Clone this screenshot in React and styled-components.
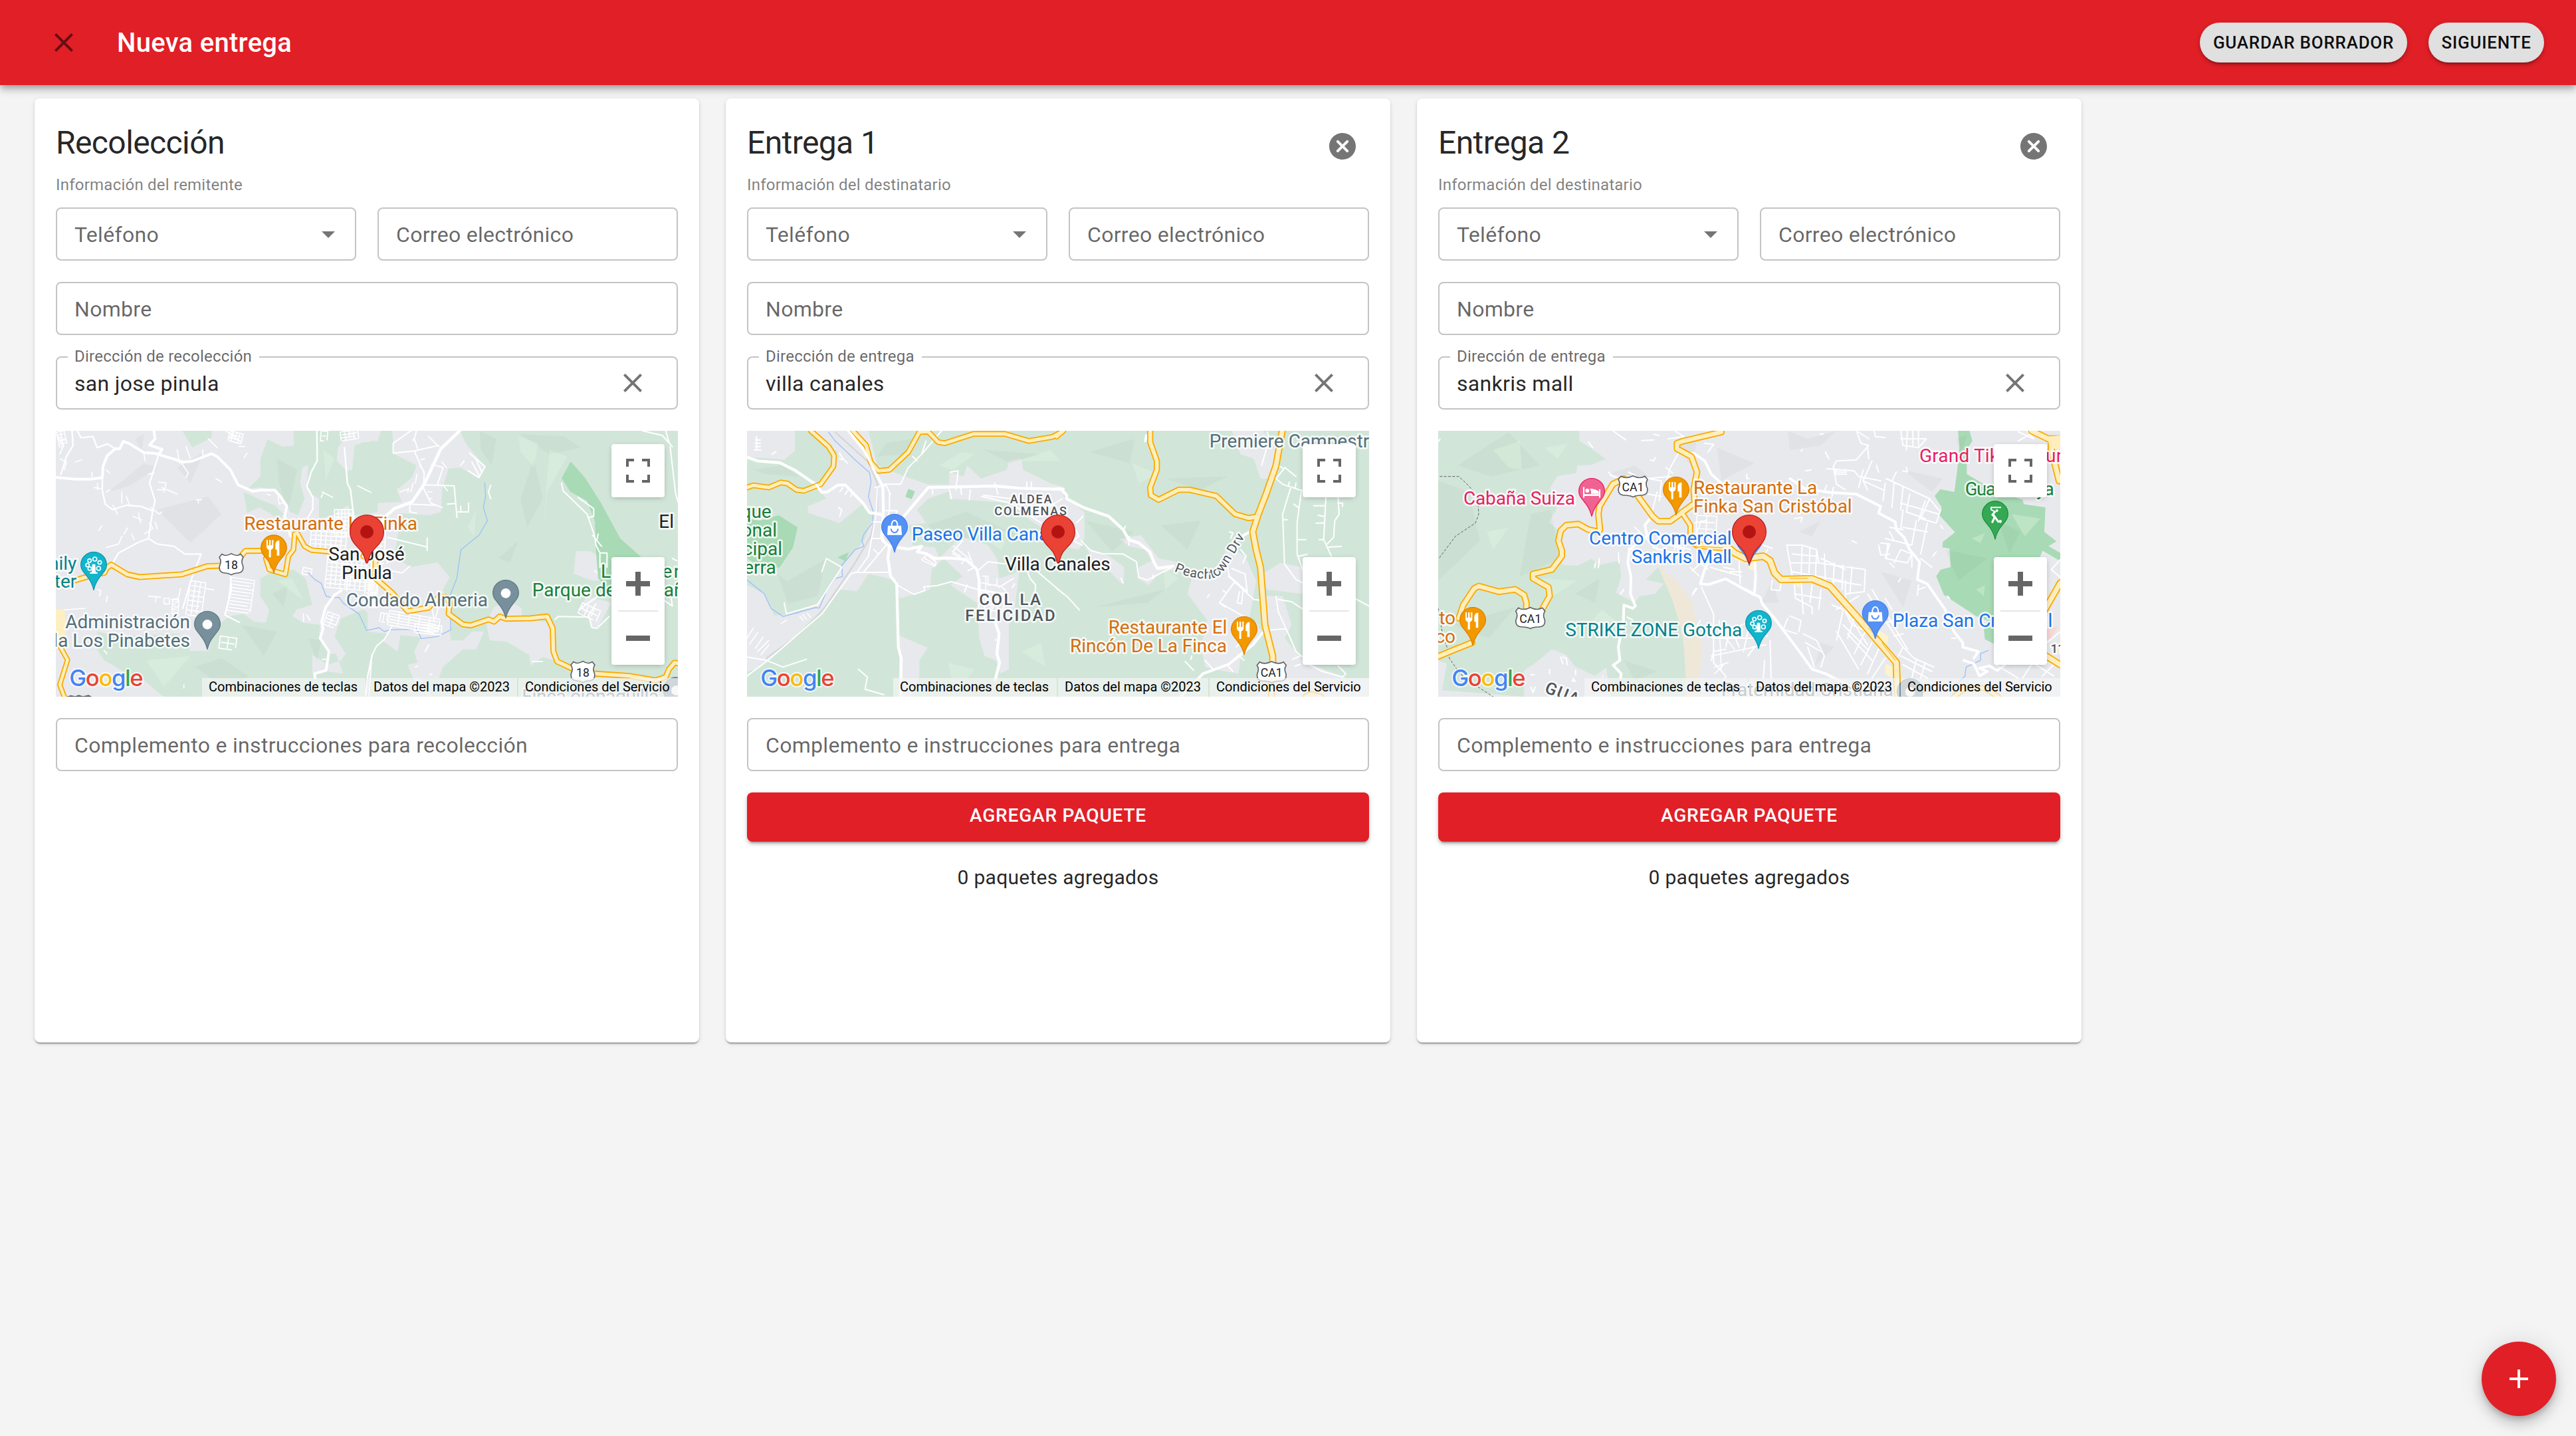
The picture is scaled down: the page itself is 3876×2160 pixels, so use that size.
import React from "react";
import styled, { createGlobalStyle, css } from "styled-components";

const GlobalStyle = createGlobalStyle`
  *, *::before, *::after { box-sizing: border-box; }
  html, body { margin: 0; padding: 0; background: #f4f4f4; }
  body { font-family: Roboto, "Liberation Sans", sans-serif; color: rgba(0, 0, 0, 0.87); }
  button, input { font-family: inherit; }
`;

const RED = "#e11f27";

/* ---------- page shell ---------- */

const Page = styled.div`
  min-height: 2160px;
  display: flex;
  flex-direction: column;
`;

const AppBar = styled.header`
  position: relative;
  z-index: 2;
  height: 128px;
  padding: 0 48px 0 72px;
  display: flex;
  align-items: center;
  background: ${RED};
  box-shadow: 0 4px 8px -2px rgba(0, 0, 0, 0.2), 0 8px 10px 0 rgba(0, 0, 0, 0.14),
    0 2px 20px 0 rgba(0, 0, 0, 0.12);
`;

const AppTitle = styled.h1`
  flex: 1;
  margin: 0 0 0 56px;
  padding-top: 2px;
  font-size: 40px;
  font-weight: 500;
  line-height: 64px;
  letter-spacing: 0.0075em;
  color: #fff;
`;

const Actions = styled.div`
  display: flex;
  gap: 32px;
`;

const PillButton = styled.button`
  width: ${(p) => p.$width}px;
  height: 60px;
  padding: 0;
  border: 0;
  border-radius: 30px;
  background: #e0e0e0;
  color: rgba(0, 0, 0, 0.95);
  font-size: 26px;
  font-weight: 500;
  letter-spacing: 0.0285em;
  white-space: nowrap;
  box-shadow: 0 6px 2px -4px rgba(0, 0, 0, 0.2), 0 4px 4px 0 rgba(0, 0, 0, 0.14),
    0 2px 10px 0 rgba(0, 0, 0, 0.12);
`;

const IconButton = styled.button`
  width: ${(p) => p.$size || 48}px;
  height: ${(p) => p.$size || 48}px;
  flex: none;
  padding: 0;
  border: 0;
  background: none;
  color: rgba(0, 0, 0, 0.54);
  display: flex;
  align-items: center;
  justify-content: center;
`;

const Icon = styled.svg`
  width: 48px;
  height: 48px;
  fill: currentColor;
  display: block;
`;

const Board = styled.main`
  display: flex;
  gap: 40px;
  padding: 20px 52px;
`;

/* ---------- card ---------- */

const Card = styled.section`
  width: 1000px;
  height: 1420px;
  padding: 32px;
  border-radius: 8px;
  background: #fff;
  display: flex;
  flex-direction: column;
  box-shadow: 0 4px 2px -2px rgba(0, 0, 0, 0.2), 0 2px 2px 0 rgba(0, 0, 0, 0.14),
    0 2px 6px 0 rgba(0, 0, 0, 0.12);
`;

const CardHead = styled.div`
  height: 78px;
  display: flex;
  align-items: flex-start;
  justify-content: space-between;
`;

const CardTitle = styled.h2`
  margin: 3px 0 0;
  font-size: 48px;
  font-weight: 400;
  line-height: 64px;
  letter-spacing: -0.6px;
`;

const Caption = styled.div`
  height: 40px;
  margin-bottom: 14px;
  font-size: 24px;
  line-height: 40px;
  letter-spacing: 0.0094em;
  color: rgba(0, 0, 0, 0.5);
`;

const Fields = styled.div`
  display: flex;
  flex-direction: column;
  gap: 32px;
`;

const FieldRow = styled.div`
  display: grid;
  grid-template-columns: 1fr 1fr;
  gap: 32px;
`;

const FieldBox = styled.div`
  position: relative;
  height: 80px;
  padding: 0 ${(p) => p.$end || 26}px 0 26px;
  border: 2px solid rgba(0, 0, 0, 0.23);
  border-radius: 8px;
  display: flex;
  align-items: center;
  justify-content: space-between;
  font-size: 32px;
  letter-spacing: 0.0094em;
`;

const Placeholder = styled.span`
  padding-top: 2px;
  color: rgba(0, 0, 0, 0.6);
`;

const FieldValue = styled.span`
  padding-top: 2px;
  color: rgba(0, 0, 0, 0.87);
`;

const FloatLabel = styled.span`
  position: absolute;
  left: 16px;
  top: -17px;
  padding: 0 11px 0 10px;
  background: #fff;
  color: rgba(0, 0, 0, 0.6);
  font-size: 24px;
  line-height: 30px;
  letter-spacing: 0.0094em;
`;

const AddButton = styled.button`
  height: 74px;
  padding: 0 0 5px;
  border: 0;
  border-radius: 8px;
  background: ${RED};
  color: #fff;
  font-size: 28px;
  font-weight: 500;
  letter-spacing: 0.0286em;
  box-shadow: 0 6px 2px -4px rgba(0, 0, 0, 0.2), 0 4px 4px 0 rgba(0, 0, 0, 0.14),
    0 2px 10px 0 rgba(0, 0, 0, 0.12);
`;

const Count = styled.p`
  margin: -2px 0 0;
  text-align: center;
  font-size: 30px;
  line-height: 48px;
  letter-spacing: 0.0094em;
`;

const Fab = styled.button`
  position: fixed;
  right: 30px;
  bottom: 30px;
  width: 112px;
  height: 112px;
  padding: 0;
  border: 0;
  border-radius: 50%;
  background: ${RED};
  color: #fff;
  display: flex;
  align-items: center;
  justify-content: center;
  box-shadow: 0 6px 10px -2px rgba(0, 0, 0, 0.2), 0 12px 20px 0 rgba(0, 0, 0, 0.14),
    0 2px 36px 0 rgba(0, 0, 0, 0.12);
`;

/* ---------- map frame ---------- */

const MapFrame = styled.div`
  position: relative;
  width: 936px;
  height: 400px;
  overflow: hidden;
`;

const MapCanvas = styled.svg`
  width: 936px;
  height: 400px;
  display: block;
  font-family: Roboto, "Liberation Sans", sans-serif;
`;

const Controls = styled.div`
  position: absolute;
  top: 20px;
  right: 20px;
  width: 80px;
  display: flex;
  flex-direction: column;
  gap: 90px;
`;

const ControlBox = styled.div`
  height: ${(p) => p.$height}px;
  border-radius: 4px;
  background: #fff;
  box-shadow: 0 2px 8px -2px rgba(0, 0, 0, 0.3);
`;

const ControlIcon = styled.svg`
  display: block;
  fill: #666;
`;

const Attribution = styled.div`
  position: absolute;
  right: 0;
  bottom: 0;
  height: 28px;
  display: flex;
  gap: 2px;
`;

const Credit = styled.span`
  width: ${(p) => p.$width}px;
  padding-left: 10px;
  background: rgba(245, 245, 245, 0.7);
  color: #000;
  font-size: 20px;
  line-height: 27px;
  white-space: nowrap;
`;

/* ---------- map primitives ---------- */

const Ground = styled.rect`
  fill: ${(p) => p.$tone || "#e8e9ed"};
`;
const Wood = styled.polygon`
  fill: #d1e6d9;
`;
const Town = styled.polygon`
  fill: #e8e9ed;
`;
const Park = styled.polygon`
  fill: #a8dab5;
`;
const Shade = styled.path`
  fill: rgba(60, 90, 80, 0.045);
`;
const Glow = styled.path`
  fill: rgba(225, 245, 225, 0.35);
`;
const line = css`
  fill: none;
  stroke-linecap: round;
  stroke-linejoin: round;
`;
const Street = styled.path`
  ${line}
  stroke: #fff;
  stroke-width: ${(p) => p.$w || 6};
`;
const River = styled.path`
  ${line}
  stroke: #9dc0f9;
  stroke-width: 4;
`;
const Rail = styled.path`
  ${line}
  stroke: #d5d6da;
  stroke-width: 7;
`;
const Border = styled.path`
  ${line}
  stroke: #5f6368;
  stroke-width: 3;
  stroke-dasharray: 10 9;
`;
const Casing = styled.path`
  ${line}
  stroke: #f9ab00;
`;
const Core = styled.path`
  ${line}
  stroke: #ffeebc;
`;
const Label = styled.text`
  font-size: ${(p) => p.$size || 84}px;
  font-weight: ${(p) => p.$weight || 400};
  letter-spacing: ${(p) => p.$track || 0}px;
  fill: ${(p) => p.$color};
  stroke: rgba(255, 255, 255, 0.8);
  stroke-width: 16px;
  stroke-linejoin: round;
  paint-order: stroke;
`;
const Logo = styled.text`
  font-family: Inter, Roboto, sans-serif;
  font-size: 104px;
  font-weight: 500;
  stroke: rgba(255, 255, 255, 0.75);
  stroke-width: 12px;
  stroke-linejoin: round;
  paint-order: stroke;
`;
const ShieldText = styled.text`
  font-size: 53px;
  text-anchor: middle;
  fill: #202124;
`;

function Highways({ roads }) {
  return (
    <g>
      {roads.map(([d, w = 26]) => (
        <Casing key={d} d={d} strokeWidth={w} />
      ))}
      {roads.map(([d, w = 26]) => (
        <Core key={d} d={d} strokeWidth={w - 11} />
      ))}
    </g>
  );
}

function Blocks({ x, y, w, h, nx, ny, turn = 0, stroke = 5 }) {
  const parts = [];
  for (let i = 0; i <= nx; i++) parts.push(`M${(w * i) / nx},${(i % 2) * 6}V${h - (i % 3) * 6}`);
  for (let j = 0; j <= ny; j++) parts.push(`M${(j % 2) * 8},${(h * j) / ny}H${w - (j % 3) * 8}`);
  return (
    <g transform={`translate(${x} ${y}) rotate(${turn})`}>
      <Street d={parts.join("")} $w={stroke} />
    </g>
  );
}

const GLYPHS = {
  dot: <circle cx="0" cy="0" r="22" fill="#fff" />,
  food: (
    <g fill="#fff">
      <path d="M-33-37h6v24h6v-24h7v24h6v-24h6v30q0 10-11 14v34h-9v-34q-11-4-11-14z" />
      <path d="M25-35V33H14V6H7v-24Q9-35 25-35z" />
    </g>
  ),
  bag: (
    <g fill="none">
      <path d="M-30-8H30L33 34H-33z" fill="#fff" />
      <path d="M-13-6v-6a13 19 0 0 1 26 0v6" stroke="#fff" strokeWidth="6" />
      <path d="M-16 6q2 17 16 17t16-17" stroke="#5491f5" strokeWidth="6" />
    </g>
  ),
  bed: (
    <g fill="#fff">
      <path d="M-39-20h6v32h66v-22h6v38h-6v-8h-66v8h-6z" />
      <circle cx="-20" cy="-4" r="9" />
      <path d="M-8-13q20 0 40 12v11H-3V-2z" />
    </g>
  ),
  tree: (
    <g fill="none" stroke="#fff" strokeWidth="5">
      <path d="M-7-4h14l2 36h8v7h-34v-7h8z" fill="#fff" stroke="none" />
      <circle cx="-19" cy="-20" r="8" />
      <circle cx="5" cy="-27" r="9" />
      <circle cx="27" cy="-12" r="8" />
      <circle cx="-28" cy="0" r="8" />
      <circle cx="-18" cy="16" r="8" />
      <circle cx="22" cy="15" r="9" />
    </g>
  ),
  golf: (
    <g fill="none" stroke="#fff">
      <path d="M27-31H-18v10L4-10" strokeWidth="6" />
      <circle cx="8" cy="-17" r="6" fill="#fff" stroke="none" />
      <path d="M0-13L-12 2-2 12-14 38M-8 2L16 36" strokeWidth="9" />
      <circle cx="23" cy="32" r="7" fill="#fff" stroke="none" />
    </g>
  ),
};

const PIN_TONES = {
  slate: ["#78909c", "#5f7884"],
  orange: ["#f29900", "#e28000"],
  blue: ["#5491f5", "#4180ee"],
  teal: ["#12b5cb", "#0f98ab"],
  pink: ["#f06292", "#e91e63"],
  green: ["#34a853", "#1e8e3e"],
};

function Poi({ x, y, tone, glyph }) {
  const [fill, edge] = PIN_TONES[tone];
  return (
    <g transform={`translate(${x} ${y})`}>
      <path
        d="M0 0C-5-24-12-40-33-65-48-83-58-94-58-113a58 58 0 0 1 116 0c0 19-10 30-25 48C12-40 5-24 0 0z"
        fill={fill}
        stroke={edge}
        strokeWidth="4"
        strokeLinejoin="round"
      />
      <g transform="translate(0 -112)">{GLYPHS[glyph]}</g>
    </g>
  );
}

function Marker() {
  return (
    <g transform="translate(1416 622)">
      <path
        d="M0-1C-8-1-6-26-22-50-38-74-76-96-76-142a76 76 0 0 1 152 0c0 46-38 68-54 92C6-26 8-1 0-1z"
        fill="#ea4335"
        stroke="#b9201d"
        strokeWidth="4"
      />
      <circle cy="-142" r="30" fill="#b31412" />
    </g>
  );
}

function Shield({ x, y, children, half = 54 }) {
  const h = half;
  return (
    <g transform={`translate(${x} ${y})`}>
      <path
        d={`M${-h + 12}-46Q${-h / 2 + 2}-32 0-48Q${h / 2 - 2}-32 ${h - 12}-46L${h}-31Q${h - 12}-14 ${h - 1} 8Q${h + 3} 40 ${h - 28} 40Q12 40 0 48Q-12 40 ${-h + 28} 40Q${-h - 3} 40 ${-h + 1} 8Q${-h + 12}-14 ${-h}-31Z`}
        fill="#fff"
        stroke="#5f6368"
        strokeWidth="5"
        strokeLinejoin="round"
      />
      <ShieldText y="22">{children}</ShieldText>
    </g>
  );
}

function GoogleMark() {
  return (
    <Logo x="73" y="1175" textLength="334">
      <tspan fill="#4285f4">G</tspan>
      <tspan fill="#ea4335">o</tspan>
      <tspan fill="#fbbc04">o</tspan>
      <tspan fill="#4285f4">g</tspan>
      <tspan fill="#34a853">l</tspan>
      <tspan fill="#ea4335">e</tspan>
    </Logo>
  );
}

const C = {
  slate: "#546e7a",
  orange: "#d56e0c",
  blue: "#1a73e8",
  teal: "#00838f",
  green: "#188038",
  pink: "#e91e63",
  black: "#202124",
  grey: "#50555b",
};

/* ---------- the three maps ---------- */

function PinulaMap() {
  return (
    <>
      <Ground x="12" y="24" width="2808" height="1200" />
      <Wood points="583,24 716,24 716,55 628,100" />
      <Wood points="968,62 1035,95 1085,92 1085,24 1340,24 1285,100 1280,160 1325,205 1350,200 1360,90 1400,75 1440,75 1440,400 1350,405 1330,360 1270,400 1200,425 1200,330 1165,310 1145,270 1150,180 1125,190 1115,260 1135,330 1105,405 1070,390 1055,350 1010,290 930,280 880,285 935,230 935,150" />
      <Wood points="860,300 960,345 1000,360 1040,400 1020,430 985,400 930,370 875,395" />
      <Wood points="935,690 990,660 1085,650 1140,690 1170,810 1100,830 1080,860 1130,890 1205,900 1200,960 1250,1030 1320,1030 1270,950 1300,870 1400,830 1440,860 1440,1224 500,1224 480,1210 410,1150 300,1100 230,1060 190,1000 200,930 280,950 560,940 620,990 615,1018 700,1018 740,900 800,860 860,850 905,885 960,890 975,830 935,770" />
      <Town points="1170,1035 1240,1080 1300,1060 1320,1030 1270,1010 1310,1120 1240,1110 1170,1120" />
      <g transform="translate(1410 0)">
        <Wood points="20,24 1410,24 1410,1224 20,1224" />
        <Town points="120,24 425,24 455,85 540,185 512,240 430,190 375,195 345,290 340,390 290,405 155,395 145,500 130,590 200,640 325,618 380,685 350,740 390,900 380,930 290,960 10,930 10,400 55,390 55,350 165,345 140,290 210,235 230,180 130,130" />
        <Town points="0,24 70,24 55,70 0,70" />
        <Town points="950,567 1015,567 1050,590 1060,700 1020,700 940,668" />
        <Town points="580,820 650,790 705,825 705,870 840,890 850,1060 800,1045 745,1082 740,1035 635,975 560,970 545,890" />
        <Town points="75,970 120,920 160,925 145,1020" />
        <Town points="220,1020 250,960 380,925 385,970 440,970 480,930 535,930 500,1010 440,1010 350,1090 330,1140 250,1140 300,1224 240,1200 190,1080 235,1070" />
        <Town points="960,830 1000,770 1110,800 1050,910 1015,905 1005,860" />
        <Park points="926,163 990,235 1060,345 1150,510 1245,595 1110,640 1110,780 1060,700 1050,690 1040,560 1035,430 1000,340 925,300 885,238" />
        <Shade d="M515 24L590 60 570 180 520 110zM700 40L900 50 970 100 830 130zM760 150L800 330 730 460 700 330zM600 600L690 520 650 620z" />
        <Glow d="M830 110L910 140 820 300 800 470zM690 50L780 80 760 190 700 120zM460 460L500 380 490 500z" />
      </g>
      <Shade d="M470 380L700 320 760 400 620 530zM410 170L470 190 350 270 250 300zM560 190L680 120 620 260zM1010 150L1100 200 1060 390 1020 260zM850 900L1010 930 950 1040zM990 760L1060 720 1040 820zM1150 960L1210 970 1190 1060zM370 60L410 40 400 110zM640 1090L760 1050 880 1130 800 1200z" />
      <Glow d="M1010 700L1080 690 1130 790zM420 1060L620 1040 500 1180zM1220 110L1270 150 1230 250z" />
      <River d="M1148 660L1180 695 1210 712 1232 770 1262 778 1290 775 1310 802 1380 850 1415 925 1440 920 1470 912 1495 930 1520 922 1625 920 1640 915 1662 962 1735 952 1795 922 1790 770 1822 690 1840 562 1922 495 1960 430 1942 370 1952 320 1948 258" />
      <Street
        $w={12}
        d="M12 234L100 242 170 242 222 235 225 185 243 138 280 105 300 105 316 72 345 82 410 123 455 125 540 150 585 165 625 162 715 127 740 140 800 200 835 268 900 297 935 292 1000 292 1025 320 1055 365 1045 410 1072 500M455 24L460 60 435 88 492 108 475 132M1300 745L1270 765 1230 820 1212 885 1218 920 1205 960 1245 1020 1232 1105 1180 1120 1182 1140"
      />
      <Street
        $w={14}
        d="M1835 24L1750 105 1675 265 1620 345 1540 375 1490 420 1485 480"
      />
      <Street
        $w={7}
        d="M110 24L125 55 180 50 198 100 245 83 280 105M85 24L90 90 60 140 35 220M475 135L435 260 460 340 450 380 430 510 390 525 295 575 255 645M222 235L222 295 235 355 268 380 330 360 395 365 450 385M430 510L470 535 545 545 595 580 668 580 625 690 585 825M1190 24L1192 158 1165 210 1145 275 1172 325 1172 378 1130 450M1315 100L1328 260 1342 290 1358 420M1325 745L1330 690M1440 1035L1420 1130 1410 1224M800 680L805 740 775 855 840 888"
      />
      <Street
        $w={5}
        d="M12 835L145 825M20 45L45 95 30 130M25 70L50 60M30 150L60 165 50 200M100 165L130 155M175 210V230M240 200L255 215M560 110L570 170M600 95L620 150M675 110V135M700 60L740 100M780 24L850 75M810 24L800 60M840 95H865M875 125L862 145M735 240L760 255M645 335H670M655 335V350M580 170L610 215 600 235M410 130L415 160M430 220L455 215M475 255L510 260 500 300M490 280L560 310 515 290M470 290H500M360 410L400 425M385 395L395 440M435 440L450 465 410 490M440 370L480 400 490 390M460 435L470 468M205 475L220 452M240 550L295 535 310 500M320 490L335 462M355 490L365 515M185 280L215 285M200 260V290M240 300L255 290M310 300V350M270 360L290 400M330 320L345 360M430 770L485 775M465 772L462 795M500 785V805H525V780H500M535 785L565 780M240 795L245 770M200 740L215 745 210 770M230 1015L243 1030M575 735L560 800M690 735L725 742M1130 850V885M1015 320L1020 355 1035 350M965 310L980 315M1375 272L1435 302M1215 300L1262 325M1210 325L1220 300M1145 855L1160 880M590 1170V1185M1215 1055H1235"
      />
      <Blocks x={620} y={700} w={70} h={155} nx={3} ny={7} turn={8} />
      <Blocks x={805} y={685} w={105} h={150} nx={1} ny={10} turn={8} />
      <Blocks x={540} y={785} w={28} h={65} nx={1} ny={6} turn={4} />
      <Blocks x={1130} y={640} w={40} h={30} nx={1} ny={2} turn={12} />
      <Blocks x={1165} y={475} w={160} h={95} nx={7} ny={5} turn={4} />
      <Blocks x={1240} y={580} w={200} h={150} nx={9} ny={8} turn={5} />
      <Blocks x={1440} y={470} w={60} h={90} nx={3} ny={5} turn={2} />
      <Blocks x={1440} y={620} w={30} h={200} nx={2} ny={9} turn={3} />
      <Blocks x={1270} y={380} w={80} h={120} nx={5} ny={7} />
      <Blocks x={755} y={950} w={75} h={55} nx={2} ny={2} turn={8} />
      <Blocks x={1240} y={840} w={55} h={60} nx={2} ny={4} turn={20} />
      <Blocks x={15} y={30} w={35} h={70} nx={2} ny={5} turn={-12} />
      <Blocks x={800} y={24} w={60} h={45} nx={4} ny={3} turn={15} />
      <Blocks x={1210} y={24} w={30} h={45} nx={1} ny={2} turn={5} />
      <Blocks x={1295} y={30} w={80} h={40} nx={4} ny={3} turn={-8} />
      <g transform="translate(1410 0)">
        <Street
          $w={6}
          d="M205 24L125 80V125L220 115 330 90M230 24L220 60 235 105M220 115L265 215 262 265M330 95L285 50M300 175L350 190 325 265M262 268L400 272 413 415M370 355L405 352M415 390H465V350M430 365V390M255 270L295 350 345 370M200 355L315 360M200 355V390L230 395M100 505L278 548M278 508V565M110 655L165 665 200 635M470 125L540 185 512 235 465 205M480 165L515 230M495 145L525 210M430 180L445 160M565 270L555 300 565 330M885 260L892 295 1000 400 1035 500 1040 540 1058 575V640M960 325L1030 375V410L1010 415M1025 495L1065 545M1058 575H1090V640M855 875L870 862 1010 865 1022 912 1045 915 1100 862M1375 95L1400 310 1410 345M1250 24L1340 45 1385 95M1355 24L1370 75M755 1065H798M285 990L270 1020M120 905L85 965 50 995 28 1040 15 1224M1045 515L1050 490M1035 655L1045 665M1385 600L1405 610M965 830L1050 770M1005 860L1040 805M1350 790L1385 815 1380 780"
        />
        <Blocks x={110} y={835} w={230} h={65} nx={5} ny={5} turn={10} stroke={5} />
        <Blocks x={225} y={895} w={120} h={40} nx={2} ny={3} turn={5} />
        <Blocks x={70} y={845} w={30} h={40} nx={2} ny={1} turn={10} />
        <Blocks x={980} y={800} w={90} h={50} nx={3} ny={2} turn={25} />
        <Blocks x={10} y={560} w={90} h={60} nx={3} ny={2} turn={2} />
        <Blocks x={0} y={700} w={50} h={110} nx={3} ny={6} turn={4} />
        <Street $w={5} d="M155 300L195 285 190 300M215 260L205 300M232 220L225 260M250 155L268 150M280 300H300M285 330H300M300 820L310 880M330 820L315 870M215 60V70M355 275L370 295M235 1085L225 1090M290 1125L300 1120M245 180L265 210M345 165L365 190" />
      </g>
      <polygon points="12,830 50,830 60,900 45,1010 12,1000" fill="#feefc3" />
      <Highways
        roads={[
          ["M12 722L60 710 190 672 232 665 240 645 262 628 335 672 390 684 580 672 695 635 770 632 830 610 868 566 1000 565", 27],
          ["M960 600L975 650 1048 672 1062 590 1085 560 1090 490 1102 485 1135 545 1165 562 1250 570", 25],
          ["M1400 590L1455 590 1455 690 1530 755 1600 838 1695 822 1740 775 1775 775 1790 800 1785 850 1850 898 1885 902 1965 875 1990 885 2015 862 2045 872 2155 870 2230 862 2255 915 2258 1020 2275 1065 2360 1105 2450 1120 2600 1130 2720 1150 2765 1135 2780 1100 2805 1070 2830 1075", 27],
          ["M30 995L65 1058 30 1170 50 1224", 24],
        ]}
      />
      <Poi x={183} y={742} tone="teal" glyph="tree" />
      <Poi x={996} y={666} tone="orange" glyph="food" />
      <Poi x={696} y={1010} tone="slate" glyph="dot" />
      <Poi x={2043} y={869} tone="slate" glyph="dot" />
      <Poi x={2812} y={1308} tone="slate" glyph="dot" />
      <Shield x={804} y={626}>18</Shield>
      <Shield x={2391} y={1112}>18</Shield>
      <Label x="106" y="652" $color={C.teal} textAnchor="end">Family</Label>
      <Label x="106" y="732" $color={C.teal} textAnchor="end">Center</Label>
      <Label x="862" y="470" $color={C.orange} textLength="782">Restaurante La Finka</Label>
      <Label x="1243" y="609" $color={C.black} textLength="343">San José</Label>
      <Label x="1302" y="693" $color={C.black} textLength="227">Pinula</Label>
      <Label x="1322" y="816" $color={C.slate} textLength="640">Condado Almeria</Label>
      <Label x="55" y="914" $color={C.slate} textLength="563">Administración</Label>
      <Label x="618" y="998" $color={C.slate} textAnchor="end">Villa Los Pinabetes</Label>
      <Label x="2734" y="461" $color={C.black}>El</Label>
      <Label x="2472" y="686" $color={C.green} textLength="376">Lugar en</Label>
      <Label x="2162" y="770" $color={C.green} textLength="732">Parque de Montaña</Label>
      <Label x="2116" y="1252" $color={C.slate} textLength="618">Finca ojonaguilla</Label>
      <path d="M60 1224L80 1217 100 1222 115 1216 135 1222 160 1216 175 1224z" fill="#5f6368" />
    </>
  );
}

function CanalesMap() {
  return (
    <>
      <Ground x="12" y="24" width="2808" height="1200" $tone="#d1e6d9" />
      <Town points="12,24 228,24 228,115 180,155 12,140" />
      <Town points="300,24 560,24 600,180 710,225 825,265 1000,270 830,330 780,380 820,440 740,450 760,540 860,550 880,600 980,500 1100,540 1140,600 1150,690 1240,660 1220,830 1194,900 1194,1100 1155,1118 1135,1060 1085,1040 1060,960 1050,800 930,720 985,680 900,600 845,650 838,740 700,780 690,700 560,670 510,747 430,740 330,850 200,980 50,1100 12,1110 12,720 90,760 135,857 240,850 340,800 430,650 540,520 585,400 540,350 430,440 290,395 285,365 370,330 330,280 400,200 420,120" />
      <Town points="925,210 990,230 1005,180 1068,240 1185,200 1195,160 1250,150 1258,200 1390,265 1440,275 1440,420 1340,460 1280,420 1200,350 1070,340 925,330" />
      <Town points="700,948 828,1003 790,1060 790,1130 750,1224 700,1224" />
      <g transform="translate(1410 0)">
        <Town points="10,310 50,330 125,390 125,510 100,560 0,540" />
        <Town points="280,512 380,495 460,600 540,615 530,650 460,670 415,720 365,690 370,640 430,610 400,560 330,545" />
        <Town points="130,550 240,590 305,640 300,720 240,660 170,620" />
        <Town points="790,24 930,24 1000,100 980,240 920,240 890,150 830,130" />
        <Town points="590,760 610,690 720,690 770,540 850,590 900,700 870,870 930,930 830,1050 820,1120 760,1110 670,1090 650,1000 680,880" />
        <Town points="930,670 1010,620 1110,640 1110,760 950,740" />
        <Town points="930,770 1020,770 1060,900 1030,960 1110,1060 1230,1110 1310,1140 1410,1140 1410,1224 900,1224 990,1100 930,900" />
      </g>
      <Park points="12,420 70,430 155,405 240,460 220,550 160,640 100,650 12,600" />
      <Park points="740,286 770,298 755,333 727,322" />
      <Park points="420,595 472,572 455,612" />
      <Shade d="M830 450L1000 390 1180 470 1330 520 1100 520 900 500zM200 700L370 600 330 770 210 800zM640 80L760 60 730 130 600 140zM1080 110L1340 130 1200 170zM40 200L170 180 250 230 100 220zM1560 120L1760 60 1740 170zM1540 430L1760 480 1660 570zM1880 450L2060 430 2000 560zM1900 240L2180 230 2060 290zM1580 820L1900 740 1820 800zM150 670L240 740 200 810z" />
      <Glow d="M880 180L980 120 1040 130 940 200zM1000 460L1200 480 1160 560zM1230 160L1380 110 1430 160zM920 1070L1040 1100 950 1210zM1250 1020L1340 980 1360 1090zM1750 170L1870 220 1780 260zM1890 640L1960 690 1900 740zM2240 840L2330 900 2280 960z" />
      <River d="M380 30L410 70 500 155 565 212 572 255 560 322 582 390 578 440 540 490 530 520 540 545 500 560 440 630 443 682 410 690 370 750 338 824 320 822 175 862 120 825 90 760 12 697" />
      <Rail d="M410 30L560 165 600 260 600 380 570 500 500 620 350 840 250 940 100 1050" />
      <Street
        $w={6}
        d="M600 285L595 400 560 590 510 660M655 300L655 385 620 520M510 663L650 662M510 660L480 670 350 850 100 1065 12 1130M590 280L640 270 660 310M640 385H690L680 410M580 435H620M575 510H625M640 540L540 660M585 560L605 580M890 24L800 130 740 190 705 265 630 265M820 70L800 130M760 140L780 160M975 590L940 570 985 520M1060 650L1100 615 1180 625M690 720L765 762 815 745 810 728 870 722 935 705 1060 742M180 800L190 850 330 808 440 640 370 600 350 660M1270 640L1290 690 1315 720 1310 770M1300 640L1440 760M12 1045L100 1060 175 1090 280 1055M515 1100L555 1135 545 1190 630 1215M930 210L965 205 955 290M1070 320L1200 350 1340 440M1080 315L1200 330M935 330L925 290M980 310L975 270M1015 335L1020 290M850 310V290M1130 260L1145 310M1275 255V290M1295 255V290M430 125L445 150 465 170M430 150L450 155M45 110H75M55 50V110M50 65H72M50 80H72M50 95H72M125 130L142 118M425 370L440 380 430 410M430 300L445 280M455 310L470 290M480 320L490 300M1150 730L1215 690M1210 730L1220 715M995 750L1005 720M1165 730L1180 745M1010 655L1040 640M1135 965V970M790 24L800 40M1355 380L1435 330M1320 415L1380 350"
      />
      <Street
        $w={13}
        d="M12 143L60 160 160 168 230 203 325 268 350 302 375 300 420 270 455 268 535 350 565 393 620 402M470 24L540 110 590 210 625 275 628 380 620 500 630 525 655 545 648 600 660 680 688 715 695 1000 708 1050 705 1224M1440 288L1240 283 1130 273 830 280 720 410M655 545L740 558 800 545 780 570 820 578 860 600 930 598 1000 605 1050 650 1060 700 1060 790M1130 880L1150 940 1140 1030 1152 1070 1132 1150M1410 286L1430 286 1455 315 1455 330 1530 370 1645 410 1710 470 1735 515 1780 530 1830 570 1850 620 1865 645 1935 635"
      />
      <Street $w={5} d="M800 605L825 585 865 615M805 610L860 635 865 620M815 600L865 630M12 960L40 915M25 985L60 935M50 1005L85 955M60 1020L110 970M75 1035L110 990M165 895L190 878M250 860L265 880M265 855L280 875M285 848L298 865M1075 680H1100V720H1140V690M1070 710L1150 725M1060 740L1180 760M1090 760V680M1130 800L1110 850M940 580L1000 610M945 545L1025 610M1010 570L1030 620M980 625L1000 600" />
      <Blocks x={1070} y={745} w={110} h={80} nx={4} ny={3} turn={10} />
      <g transform="translate(1410 0)">
        <Street
          $w={6}
          d="M110 520L155 565 205 578 300 580 360 615 370 685 410 698 520 640M0 735L50 775 102 832M90 440L118 410M85 470L100 500 75 520 115 540M925 180L960 60 950 30M990 240L1030 190 1080 230M1000 180L1025 195M990 240L1020 265 1110 295M1055 285L1020 400 1028 625 1080 695 1110 710M1105 290L1085 440 1085 580 1110 650M1020 425H1040M1070 355L1090 370M1085 515H1125M1090 590L1130 582M1050 255L1045 275M1080 260L1075 285M1215 325L1205 515 1240 590M1270 325L1275 400 1255 430 1250 505 1220 535M1160 362H1210M1180 405L1205 410M1170 440H1205M1185 515H1205M1270 350H1290V365M1220 550L1285 545M1345 780L1410 815M780 480L795 485 785 510M830 560L855 590 840 620M770 640L780 680 860 750 850 670 790 645M775 680L890 785 930 790M800 710L735 800 850 865M825 750L815 800 835 805 840 745M735 800L760 820M680 775L690 762M750 745L765 755M990 770L1000 840 1050 950 1080 1020 1110 1045M1000 785L1060 795 1110 828M940 925L1030 918M850 960L810 1000M580 1065L618 1105M605 1055L610 1040M670 1060L705 1100M770 1080L795 1110M820 1035L845 1060M1065 1055L1100 1040M1075 1085L1100 1078M1140 1080L1200 1110 1290 1135 1305 1120 1270 1085M325 540L328 500M305 465L310 455M435 690V675M290 690L300 710"
        />
        <Street $w={12} d="M870 480L820 510M930 935L885 990 775 1078 660 1120 560 1224M405 45L400 70" />
      </g>
      <Highways
        roads={[
          ["M300 24L380 95 405 135 402 185 345 265 268 295 235 290 195 262 165 257 110 280 40 270 12 280", 26],
          ["M490 24L550 90 570 165 605 205 655 200 740 120 790 30 830 28 875 75 905 80 1035 38 1175 38 1285 70 1390 52 1430 30", 26],
          ["M1440 24L1415 45 1410 50", 26],
          ["M1832 24L1832 75 1862 160 1862 200 1832 280 1835 315 1870 335 1960 290 2010 290 2130 318 2215 400 2275 418 2310 412", 28],
          ["M2428 24L2400 180 2355 310 2320 400 2295 480 2310 560 2330 640 2350 900 2385 1040 2385 1080", 32],
          ["M2375 1130L2380 1224M2535 1224L2560 1214 2600 1224", 30],
        ]}
      />
      <Street $w={10} d="M325 268L350 302M470 24L540 110 600 230" />
      <Label x="122" y="416" $color={C.green} textAnchor="end">Parque</Label>
      <Label x="147" y="500" $color={C.green} textAnchor="end">Nacional</Label>
      <Label x="171" y="584" $color={C.green} textAnchor="end">Municipal</Label>
      <Label x="143" y="668" $color={C.green} textAnchor="end">Cerra</Label>
      <Label x="1199" y="351" $color={C.grey} $size={54} $weight={500} textLength="188">ALDEA</Label>
      <Label x="1129" y="405" $color={C.grey} $size={54} $weight={500} textLength="326">COLMENAS</Label>
      <Label x="755" y="518" $color={C.blue} textLength="726">Paseo Villa Canales</Label>
      <Label x="1176" y="654" $color={C.black} textLength="476">Villa Canales</Label>
      <Label x="1060" y="810" $color={C.grey} $size={72} $weight={500} textLength="278">COL LA</Label>
      <Label x="997" y="881" $color={C.grey} $size={72} $weight={500} textLength="406">FELICIDAD</Label>
      <Label x="2099" y="98" $color={C.slate} textLength="722">Premiere Campestr</Label>
      <Label x="1643" y="938" $color={C.orange} textLength="536">Restaurante El</Label>
      <Label x="1470" y="1023" $color={C.orange} textLength="708">Rincón De La Finca</Label>
      <path id="peachtown" d="M1940 658C1990 680 2040 692 2100 692C2150 686 2170 650 2190 616L2290 450" fill="none" />
      <Label $color={C.grey} $size={60} $track={1.5}>
        <textPath href="#peachtown">Peachtown Drv</textPath>
      </Label>
      <Poi x={678} y={572} tone="blue" glyph="bag" />
      <Poi x={2256} y={1034} tone="orange" glyph="food" />
      <Shield x={2380} y={1113} half={66}>CA1</Shield>
    </>
  );
}

function SankrisMap() {
  return (
    <>
      <Ground x="12" y="24" width="2808" height="1200" />
      <Wood points="12,24 648,24 650,70 720,115 768,152 700,178 640,180 635,215 550,228 515,285 548,340 545,380 512,435 550,470 545,545 575,630 640,632 705,602 740,630 830,610 838,680 815,755 900,800 920,770 990,760 1030,715 950,695 1005,640 1080,790 1120,980 1130,1140 1130,1224 790,1224 770,1092 720,1130 630,1088 590,1035 525,1010 440,1080 400,1105 400,1224 30,1195 50,1075 12,1060" />
      <polygon points="1005,635 1085,700 1160,800 1180,920 1205,1000 1190,1140 1200,1224 1135,1224 1125,1020 1110,920 1070,790" fill="#efe8d8" />
      <polygon points="1340,580 1450,600 1445,655 1415,650 1410,625 1350,605" fill="#fef3cf" />
      <g transform="translate(1410 0)">
        <Park points="948,24 1000,24 1013,70 988,110 988,220 1110,290 1240,335 1245,355 1343,370 1338,480 1393,523 1330,560 1350,540 1410,575 1410,612 1330,565 1300,640 1200,960 1110,985 1070,965 1065,920 1080,880 1030,860 985,830 885,765 850,680 870,650 915,640 910,555 878,550 880,525 935,482 865,405 875,370 843,318 868,288 932,300 945,200 955,100" />
        <Shade d="M180 24L270 60 400 24 330 90 190 110zM700 200L880 240 830 300zM230 480L330 430 290 500zM60 800L110 700 140 800zM940 60L990 40 960 130zM890 560L1080 600 950 700zM600 660L740 700 700 820zM1130 430L1230 480 1180 580zM330 980L390 1000 300 1090z" />
        <Glow d="M1010 510L1070 485 1050 530zM1030 740L1070 720 1065 770zM1190 400L1320 420 1250 500z" />
        <polygon points="215,690 250,690 230,735 205,710" fill="#fef3cf" />
        <polygon points="585,920 635,950 625,1000 580,960" fill="#fef3cf" />
        <polygon points="620,1075 660,1090 650,1140 620,1120" fill="#fef3cf" />
        <polygon points="1345,920 1400,905 1370,960 1345,965" fill="#f8d7d5" />
      </g>
      <Shade d="M12 250L150 300 200 520 12 700zM100 180L330 30 470 180 250 230zM430 400L520 380 560 600 380 680zM630 760L740 690 720 800zM80 900L360 820 240 960zM1080 90L1180 60 1160 190zM780 220L900 180 960 230zM850 1060L1000 1110 900 1150zM1270 100L1440 170 1290 250z" />
      <Glow d="M260 110L380 70 390 200 330 190zM230 480L330 460 260 560zM480 690L640 700 500 790zM750 830L840 900 700 890zM490 100L600 80 550 150z" />
      <Border d="M20 230H105L150 272 190 320 195 400 180 440 90 500 15 600M12 825L35 960 60 1020 62 1050 110 1120 200 1185 260 1224" />
      <River d="M2495 1015L2460 1030V1060L2395 1090 2390 1130 2360 1160 2330 1224" />
      <Street
        $w={12}
        d="M1130 125L1165 125 1215 160 1245 220 1295 265M965 425L945 450 955 500 875 560 868 620 882 680 880 760 902 815 890 825 850 810 848 880 825 1000 832 1060 802 1082 838 1120 835 1140M1275 540L1215 650 1195 715 1230 718 1310 692 1440 765M1600 240L1665 285 1780 302 1900 310 2010 365 2000 395 2075 435 2080 470 2115 505 2140 560 2185 615 2175 695 2220 715 2300 830 2340 930 2380 980 2380 1000 2450 1020 2430 1050M2385 1060L2430 1075 2455 1130 2490 1110 2455 1095 2500 1085 2535 1105 2570 1080M1440 600L1445 680 1440 750M1400 740L1465 775 1475 805 1530 870 1650 1030 1700 1100 1760 1120 1900 1190"
      />
      <Street
        $w={6}
        d="M690 75L710 100M800 24L858 65M930 68L985 65M985 40L1010 45M1080 24L1120 50 1050 60M1215 80L1255 85 1230 120M970 155L985 160 992 145M780 210L800 230M790 225L820 235M870 210L900 225M1110 100L1060 190 1040 260M950 240L1060 230M1000 300L980 380M960 310L1020 320M930 235L1020 250 1010 340M1040 190L1070 215M1200 730L1255 850V1070L1310 1130 1280 1224M740 600L735 640M722 622L718 642M825 575L828 620M850 740L835 760M865 865L890 878M870 555L980 590M900 460L1000 560M1000 520L1150 560M980 550L1160 600M1060 490L1100 570M1150 640L1190 680M1180 610L1230 650M1160 655L1220 600M1170 440L1220 430M1180 480L1200 430M1175 735L1160 760M1160 765L1180 735M1180 905L1195 880M1220 930L1205 950M1250 960H1440M1245 1060L1255 1020 1310 1010M1260 1090L1320 1070M1310 1000L1330 920M1350 950L1370 1000M1410 930L1390 1020M1440 1000L1410 1040M1405 220V240H1415M565 1045L575 1075M575 1045L590 1050 595 1080M515 1100V1120M632 1105V1125M430 1125H445M430 1180L440 1205 450 1180M615 1150L630 1155 620 1140M755 1130V1135M1370 610L1375 715M1330 660H1380M1300 640L1350 650M1240 640L1380 680M15 70L20 62"
      />
      <Street $w={5} d="M1280 880L1290 1100M1290 930L1440 880M1245 1040L1440 1000M1260 1120L1300 1080M1310 960L1350 1010" />
      <Blocks x={1180} y={405} w={90} h={120} nx={2} ny={4} turn={3} />
      <Blocks x={1010} y={500} w={120} h={60} nx={3} ny={2} turn={12} />
      <g transform="translate(1410 0)">
        <Street
          $w={6}
          d="M490 24L510 80 545 90 490 155 400 160 385 185 400 265 440 290M355 195L480 205 500 230 600 250M540 90L545 150M500 30L545 60M570 24L575 50 620 55M690 24L700 90 770 100 805 60M690 60H800M720 24L715 110M745 24V95M770 24V90M395 200H445M395 210H445M395 220H445M395 195V220M520 200L500 280M560 160L520 250 540 290M580 180L590 210M520 250L610 290M625 240L820 330 860 380M620 260L610 340M660 260L650 370M700 280L690 380M730 310L715 390 800 420M690 350L860 400M820 330L780 420 850 440 870 380M800 340L770 430M700 380L690 470M760 430L740 540M810 440L780 580M700 460L810 480M600 530L640 535 620 600 720 620 740 580 690 560 660 620M590 540L600 585 640 580M620 510L740 540M630 540L625 600M175 540L245 540 310 560 320 620 530 650 525 750 440 760M175 540L190 620 200 680M195 620L320 620M200 580L310 590M245 540L240 690M280 550L275 690M310 570L305 680M345 580L350 700M390 620L385 720M430 630L425 740M470 640L460 760M200 660L420 700M330 600L440 650M380 700L510 720M440 700L440 830 540 990M500 770L400 830M400 740L440 830M380 810L430 830 400 970M440 840L470 900 540 930M430 900L540 1010M450 940L560 1060M400 930L500 1100M480 870L450 960M530 930L480 1030M560 980L510 1080M590 1010L540 1120M620 1050L560 1140M540 760L700 1000 680 1040M560 740L720 1010M620 780L650 830M660 880L620 890M700 940L660 950M700 1000L750 1050 840 1090M690 1040L830 1110M700 1080L810 1140M760 1060L740 1140M800 1070L780 1140M210 720L215 780 290 820 290 850M240 700L250 850M290 720L280 800M330 740L320 830M210 760L330 780M110 700L105 740 145 745 150 700M180 870L160 920 220 940M190 860L240 880 230 930M250 940L310 970 345 1040 330 1090M260 980L330 1020M270 1000L300 1090M100 970L105 1140M20 960L90 950M20 1000L80 990M75 1060L70 1140M770 720L765 765M770 740L800 730M640 460L700 470M640 480L660 520M345 300L355 270M260 205L285 200M240 115L245 110M385 280L380 320M350 120L365 150M325 40L340 38M650 250L670 210M700 205L720 210 715 190M210 420L245 415 240 435M470 520L490 530M780 600L830 640M740 580V640M680 705L690 690M640 620L660 640M850 570L835 590M870 450L880 465M900 770L910 780M920 960H940M1370 650L1410 605M1370 650L1410 685M1120 1080L1170 1110 1220 1140M1280 1080L1240 1140M1300 1080L1380 1130M1330 1130L1400 1060M1350 980L1410 930M1220 28L1290 60 1260 24M1220 70L1290 30M70 540L110 555M60 600L90 560"
        />
      </g>
      <Highways
        roads={[
          ["M12 1042L90 1010 165 980M105 870L125 810 175 735 195 725 285 750 360 740 400 765 410 800 410 850M470 850L515 770 510 730 440 690 440 670 525 650 570 590 570 565 555 520 565 475 590 450 645 445 690 470 735 480 742 470 735 400 740 365 800 265 850 240M900 300L980 410 1005 432 1060 432 1110 395 1170 350 1165 290 1180 210 1155 140 1090 105 1090 80 1120 70 1290 30", 30],
          ["M1110 390L1150 450V490", 26],
          ["M1150 520L1180 538 1260 548 1320 550 1350 575 1400 600 1480 590 1510 610 1530 665 1560 695 1700 692 1780 725 1900 860 2080 1070 2085 1224", 34],
          ["M2690 24L2765 60 2820 60M2780 70L2780 110 2815 250M2820 710L2740 850M2740 1030L2820 1080", 32],
          ["M2340 1224L2390 1185 2480 1185 2540 1224", 26],
        ]}
      />
      <Casing d="M1600 690H1680M1160 545L1300 552M2015 980L2075 1060M1955 915L2000 960" strokeWidth="3" />
      <polygon points="2760,50 2820,45 2820,105 2775,105" fill="#ffeebc" />
      <Label x="126" y="356" $color={C.pink} textLength="504">Cabaña Suiza</Label>
      <Label x="1164" y="308" $color={C.orange} textLength="559">Restaurante La</Label>
      <Label x="1164" y="392" $color={C.orange} textLength="716">Finka San Cristóbal</Label>
      <Label x="693" y="536" $color={C.blue} textLength="644">Centro Comercial</Label>
      <Label x="884" y="620" $color={C.blue} textLength="453">Sankris Mall</Label>
      <Label x="586" y="952" $color={C.teal} textLength="798">STRIKE ZONE Gotcha</Label>
      <Label x="90" y="896" $color={C.orange} textAnchor="end">to</Label>
      <Label x="90" y="980" $color={C.orange} textAnchor="end">co</Label>
      <Label x="2184" y="164" $color={C.pink} textLength="690">Grand Tikal Futura</Label>
      <Label x="2390" y="315" $color={C.green} textLength="402">Guacamaya</Label>
      <Label x="2063" y="908" $color={C.blue} textLength="722">Plaza San Cristobal</Label>
      <Label x="1290" y="1222" $color={C.slate} textLength="776">Fraternidad Cristiana</Label>
      <Label x="2777" y="1026" $color={C.grey} $size={54} $weight={500}>11</Label>
      <g transform="translate(488 1203) rotate(22)">
        <Label $color={C.grey} $size={76} $weight={500} $track={5}>GUAJ</Label>
      </g>
      <Poi x={705} y={410} tone="pink" glyph="bed" />
      <Poi x={1086} y={404} tone="orange" glyph="food" />
      <Poi x={168} y={992} tone="orange" glyph="food" />
      <Poi x={1458} y={1006} tone="teal" glyph="tree" />
      <Poi x={1985} y={962} tone="blue" glyph="bag" />
      <Poi x={2526} y={513} tone="green" glyph="golf" />
      <Poi x={2142} y={1314} tone="slate" glyph="dot" />
      <Poi x={1416} y={632} tone="blue" glyph="bag" />
      <Shield x={891} y={275} half={66}>CA1</Shield>
      <Shield x={428} y={869} half={66}>CA1</Shield>
    </>
  );
}

function MapView({ children }) {
  return (
    <MapFrame>
      <MapCanvas viewBox="12 24 2808 1200">
        {children}
        <Marker />
        <GoogleMark />
      </MapCanvas>
      <Controls>
        <ControlBox $height={80}>
          <ControlIcon width="80" height="80" viewBox="0 0 80 80">
            <path d="M22 22h12v4h-8v8h-4zM46 22h12v12h-4v-8h-8zM22 46h4v8h8v4h-12zM54 46h4v12h-12v-4h8z" />
          </ControlIcon>
        </ControlBox>
        <ControlBox $height={162}>
          <ControlIcon width="80" height="162" viewBox="0 0 80 162">
            <path d="M22 36h14v-14h8v14h14v8h-14v14h-8v-14h-14zM22 118h36v8h-36z" />
            <path d="M10 80h60v2h-60z" fill="#e6e6e6" />
          </ControlIcon>
        </ControlBox>
      </Controls>
      <Attribution>
        <Credit $width={246}>Combinaciones de teclas</Credit>
        <Credit $width={226}>Datos del mapa ©2023</Credit>
        <Credit $width={240}>Condiciones del Servicio</Credit>
      </Attribution>
    </MapFrame>
  );
}

/* ---------- icons ---------- */

const CloseIcon = () => (
  <Icon viewBox="0 0 24 24">
    <path d="M19 6.41L17.59 5 12 10.59 6.41 5 5 6.41 10.59 12 5 17.59 6.41 19 12 13.41 17.59 19 19 17.59 13.41 12z" />
  </Icon>
);
const CancelIcon = () => (
  <Icon viewBox="0 0 24 24">
    <path d="M12 2C6.47 2 2 6.47 2 12s4.47 10 10 10 10-4.47 10-10S17.53 2 12 2zm4.3 14.3c-.39.39-1.02.39-1.41 0L12 13.41 9.11 16.3c-.39.39-1.02.39-1.41 0-.39-.39-.39-1.02 0-1.41L10.59 12 7.7 9.11c-.39-.39-.39-1.02 0-1.41.39-.39 1.02-.39 1.41 0L12 10.59l2.89-2.89c.39-.39 1.02-.39 1.41 0 .39.39.39 1.02 0 1.41L13.41 12l2.89 2.89c.38.38.38 1.02 0 1.41z" />
  </Icon>
);
const ArrowIcon = () => (
  <Icon viewBox="0 0 24 24">
    <path d="M7 10l5 5 5-5z" />
  </Icon>
);
const PlusIcon = () => (
  <Icon viewBox="0 0 24 24">
    <path d="M19 13h-6v6h-2v-6H5v-2h6V5h2v6h6z" />
  </Icon>
);

/* ---------- stop card ---------- */

function StopCard({ title, caption, addressLabel, address, notes, map, delivery }) {
  return (
    <Card>
      <CardHead>
        <CardTitle>{title}</CardTitle>
        {delivery && (
          <IconButton $size={80}>
            <CancelIcon />
          </IconButton>
        )}
      </CardHead>
      <Caption>{caption}</Caption>
      <Fields>
        <FieldRow>
          <FieldBox $end={16}>
            <Placeholder>Teléfono</Placeholder>
            <IconButton>
              <ArrowIcon />
            </IconButton>
          </FieldBox>
          <FieldBox>
            <Placeholder>Correo electrónico</Placeholder>
          </FieldBox>
        </FieldRow>
        <FieldBox>
          <Placeholder>Nombre</Placeholder>
        </FieldBox>
        <FieldBox $end={42}>
          <FloatLabel>{addressLabel}</FloatLabel>
          <FieldValue>{address}</FieldValue>
          <IconButton>
            <CloseIcon />
          </IconButton>
        </FieldBox>
        <MapView>{map}</MapView>
        <FieldBox>
          <Placeholder>{notes}</Placeholder>
        </FieldBox>
        {delivery && <AddButton>AGREGAR PAQUETE</AddButton>}
        {delivery && <Count>0 paquetes agregados</Count>}
      </Fields>
    </Card>
  );
}

export default function App() {
  return (
    <Page>
      <GlobalStyle />
      <AppBar>
        <IconButton>
          <CloseIcon />
        </IconButton>
        <AppTitle>Nueva entrega</AppTitle>
        <Actions>
          <PillButton $width={312}>GUARDAR BORRADOR</PillButton>
          <PillButton $width={174}>SIGUIENTE</PillButton>
        </Actions>
      </AppBar>
      <Board>
        <StopCard
          title="Recolección"
          caption="Información del remitente"
          addressLabel="Dirección de recolección"
          address="san jose pinula"
          notes="Complemento e instrucciones para recolección"
          map={<PinulaMap />}
        />
        <StopCard
          delivery
          title="Entrega 1"
          caption="Información del destinatario"
          addressLabel="Dirección de entrega"
          address="villa canales"
          notes="Complemento e instrucciones para entrega"
          map={<CanalesMap />}
        />
        <StopCard
          delivery
          title="Entrega 2"
          caption="Información del destinatario"
          addressLabel="Dirección de entrega"
          address="sankris mall"
          notes="Complemento e instrucciones para entrega"
          map={<SankrisMap />}
        />
      </Board>
      <Fab>
        <PlusIcon />
      </Fab>
    </Page>
  );
}
